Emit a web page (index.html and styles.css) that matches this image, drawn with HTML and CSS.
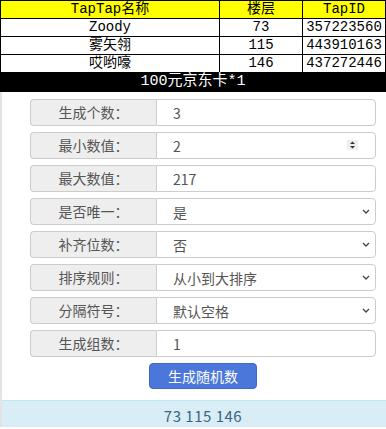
FILE: index.html
```html
<!DOCTYPE html>
<html lang="zh-CN">
<head>
    <meta charset="UTF-8">
    <meta name="viewport" content="width=device-width, initial-scale=1.0">
    <title>随机数生成</title>
    <link rel="stylesheet" href="styles.css">
</head>
<body>
    <table class="winners">
        <thead>
            <tr>
                <th class="col-name">TapTap名称</th>
                <th class="col-floor">楼层</th>
                <th class="col-id">TapID</th>
            </tr>
        </thead>
        <tbody>
            <tr><td>Zoody</td><td>73</td><td>357223560</td></tr>
            <tr><td>雾矢翎</td><td>115</td><td>443910163</td></tr>
            <tr><td>哎哟嚎</td><td>146</td><td>437272446</td></tr>
            <tr class="prize"><td colspan="3">100元京东卡*1</td></tr>
        </tbody>
    </table>

    <div class="panel">
        <form class="gen-form">
            <div class="field">
                <span class="field-label">生成个数：</span>
                <input class="field-input" type="text" value="3">
            </div>
            <div class="field">
                <span class="field-label">最小数值：</span>
                <div class="field-box">
                    <input class="field-input" type="text" value="2">
                    <span class="spin">
                        <svg width="7" height="10" viewBox="0 0 7 10"><path d="M1 4 L3.5 1.5 L6 4 Z M1 6 L3.5 8.5 L6 6 Z" fill="#333"/></svg>
                    </span>
                </div>
            </div>
            <div class="field">
                <span class="field-label">最大数值：</span>
                <input class="field-input" type="text" value="217">
            </div>
            <div class="field">
                <span class="field-label">是否唯一：</span>
                <div class="field-box">
                    <select class="field-input">
                        <option>是</option>
                        <option>否</option>
                    </select>
                    <span class="caret"><svg width="8" height="5" viewBox="0 0 8 5"><path d="M1 1 L4 4 L7 1" fill="none" stroke="#444" stroke-width="1.3"/></svg></span>
                </div>
            </div>
            <div class="field">
                <span class="field-label">补齐位数：</span>
                <div class="field-box">
                    <select class="field-input">
                        <option>否</option>
                        <option>是</option>
                    </select>
                    <span class="caret"><svg width="8" height="5" viewBox="0 0 8 5"><path d="M1 1 L4 4 L7 1" fill="none" stroke="#444" stroke-width="1.3"/></svg></span>
                </div>
            </div>
            <div class="field">
                <span class="field-label">排序规则：</span>
                <div class="field-box">
                    <select class="field-input">
                        <option>从小到大排序</option>
                        <option>从大到小排序</option>
                        <option>不排序</option>
                    </select>
                    <span class="caret"><svg width="8" height="5" viewBox="0 0 8 5"><path d="M1 1 L4 4 L7 1" fill="none" stroke="#444" stroke-width="1.3"/></svg></span>
                </div>
            </div>
            <div class="field">
                <span class="field-label">分隔符号：</span>
                <div class="field-box">
                    <select class="field-input">
                        <option>默认空格</option>
                        <option>逗号</option>
                    </select>
                    <span class="caret"><svg width="8" height="5" viewBox="0 0 8 5"><path d="M1 1 L4 4 L7 1" fill="none" stroke="#444" stroke-width="1.3"/></svg></span>
                </div>
            </div>
            <div class="field">
                <span class="field-label">生成组数：</span>
                <input class="field-input" type="text" value="1">
            </div>
            <div class="actions">
                <button type="button" class="btn-gen">生成随机数</button>
            </div>
        </form>
        <div class="result">73 115 146</div>
    </div>
</body>
</html>
```

FILE: styles.css
```css
/* 基本 */
body {
    margin: 0;
    background: #fff;
    font-family: "Noto Sans CJK SC", "Noto Sans", sans-serif;
    color: #555;
}

/* 中奖名单表格 */
.winners {
    width: 100%;
    border-collapse: collapse;
    font-family: "Liberation Mono", "Noto Sans CJK SC", monospace;
    font-size: 14px;
    color: #000;
}
.winners th, .winners td {
    border: 1px solid #000;
    padding: 0;
    height: 17px;
    line-height: 17px;
    text-align: center;
    font-weight: normal;
}
.winners thead th {
    background: #ffff00;
}
.col-name { width: 218px; }
.col-floor { width: 82px; }
.prize td {
    background: #000;
    color: #fff;
    height: 18px;
    line-height: 18px;
    font-size: 15px;
}

/* 表单部分 */
.panel {
    border-left: 2px solid #e3e3e3;
}
.gen-form {
    padding: 7px 10px 0 28px;
    display: flex;
    flex-direction: column;
    gap: 6px;
}
.field {
    display: flex;
    height: 27px;
}
.field-label {
    width: 125px;
    flex-shrink: 0;
    background: #eee;
    border: 1px solid #ccc;
    border-right: none;
    border-radius: 4px 0 0 4px;
    font-size: 14px;
    line-height: 25px;
    text-align: center;
    color: #555;
}
.field-box {
    position: relative;
    flex: 1;
    display: flex;
}
.field-input {
    flex: 1;
    min-width: 0;
    height: 27px;
    box-sizing: border-box;
    border: 1px solid #ccc;
    border-radius: 0 4px 4px 0;
    background: #fff;
    padding: 0 0 0 16px;
    font-family: "Noto Sans CJK SC", "Noto Sans", sans-serif;
    font-size: 14px;
    color: #555;
    outline: none;
    appearance: none;
    -webkit-appearance: none;
}
.caret {
    position: absolute;
    right: 6px;
    top: 11px;
    display: flex;
}
.spin {
    position: absolute;
    right: 18px;
    top: 8px;
    display: flex;
    background: #eee;
    padding: 0 2px;
}
.actions {
    display: flex;
    justify-content: center;
}
.btn-gen {
    width: 108px;
    height: 26px;
    background: #4a77d9;
    border: 1px solid #4169c4;
    border-radius: 4px;
    color: #fff;
    font-family: "Noto Sans CJK SC", sans-serif;
    font-size: 14px;
    cursor: pointer;
}

/* 结果 */
.result {
    margin-top: 11px;
    background: #d9edf7;
    border-top: 1px solid #bce8f1;
    padding: 6px 0 2px 18px;
    line-height: 18px;
    text-align: center;
    font-size: 15px;
    color: #3b6480;
    letter-spacing: 0.5px;
}
```
